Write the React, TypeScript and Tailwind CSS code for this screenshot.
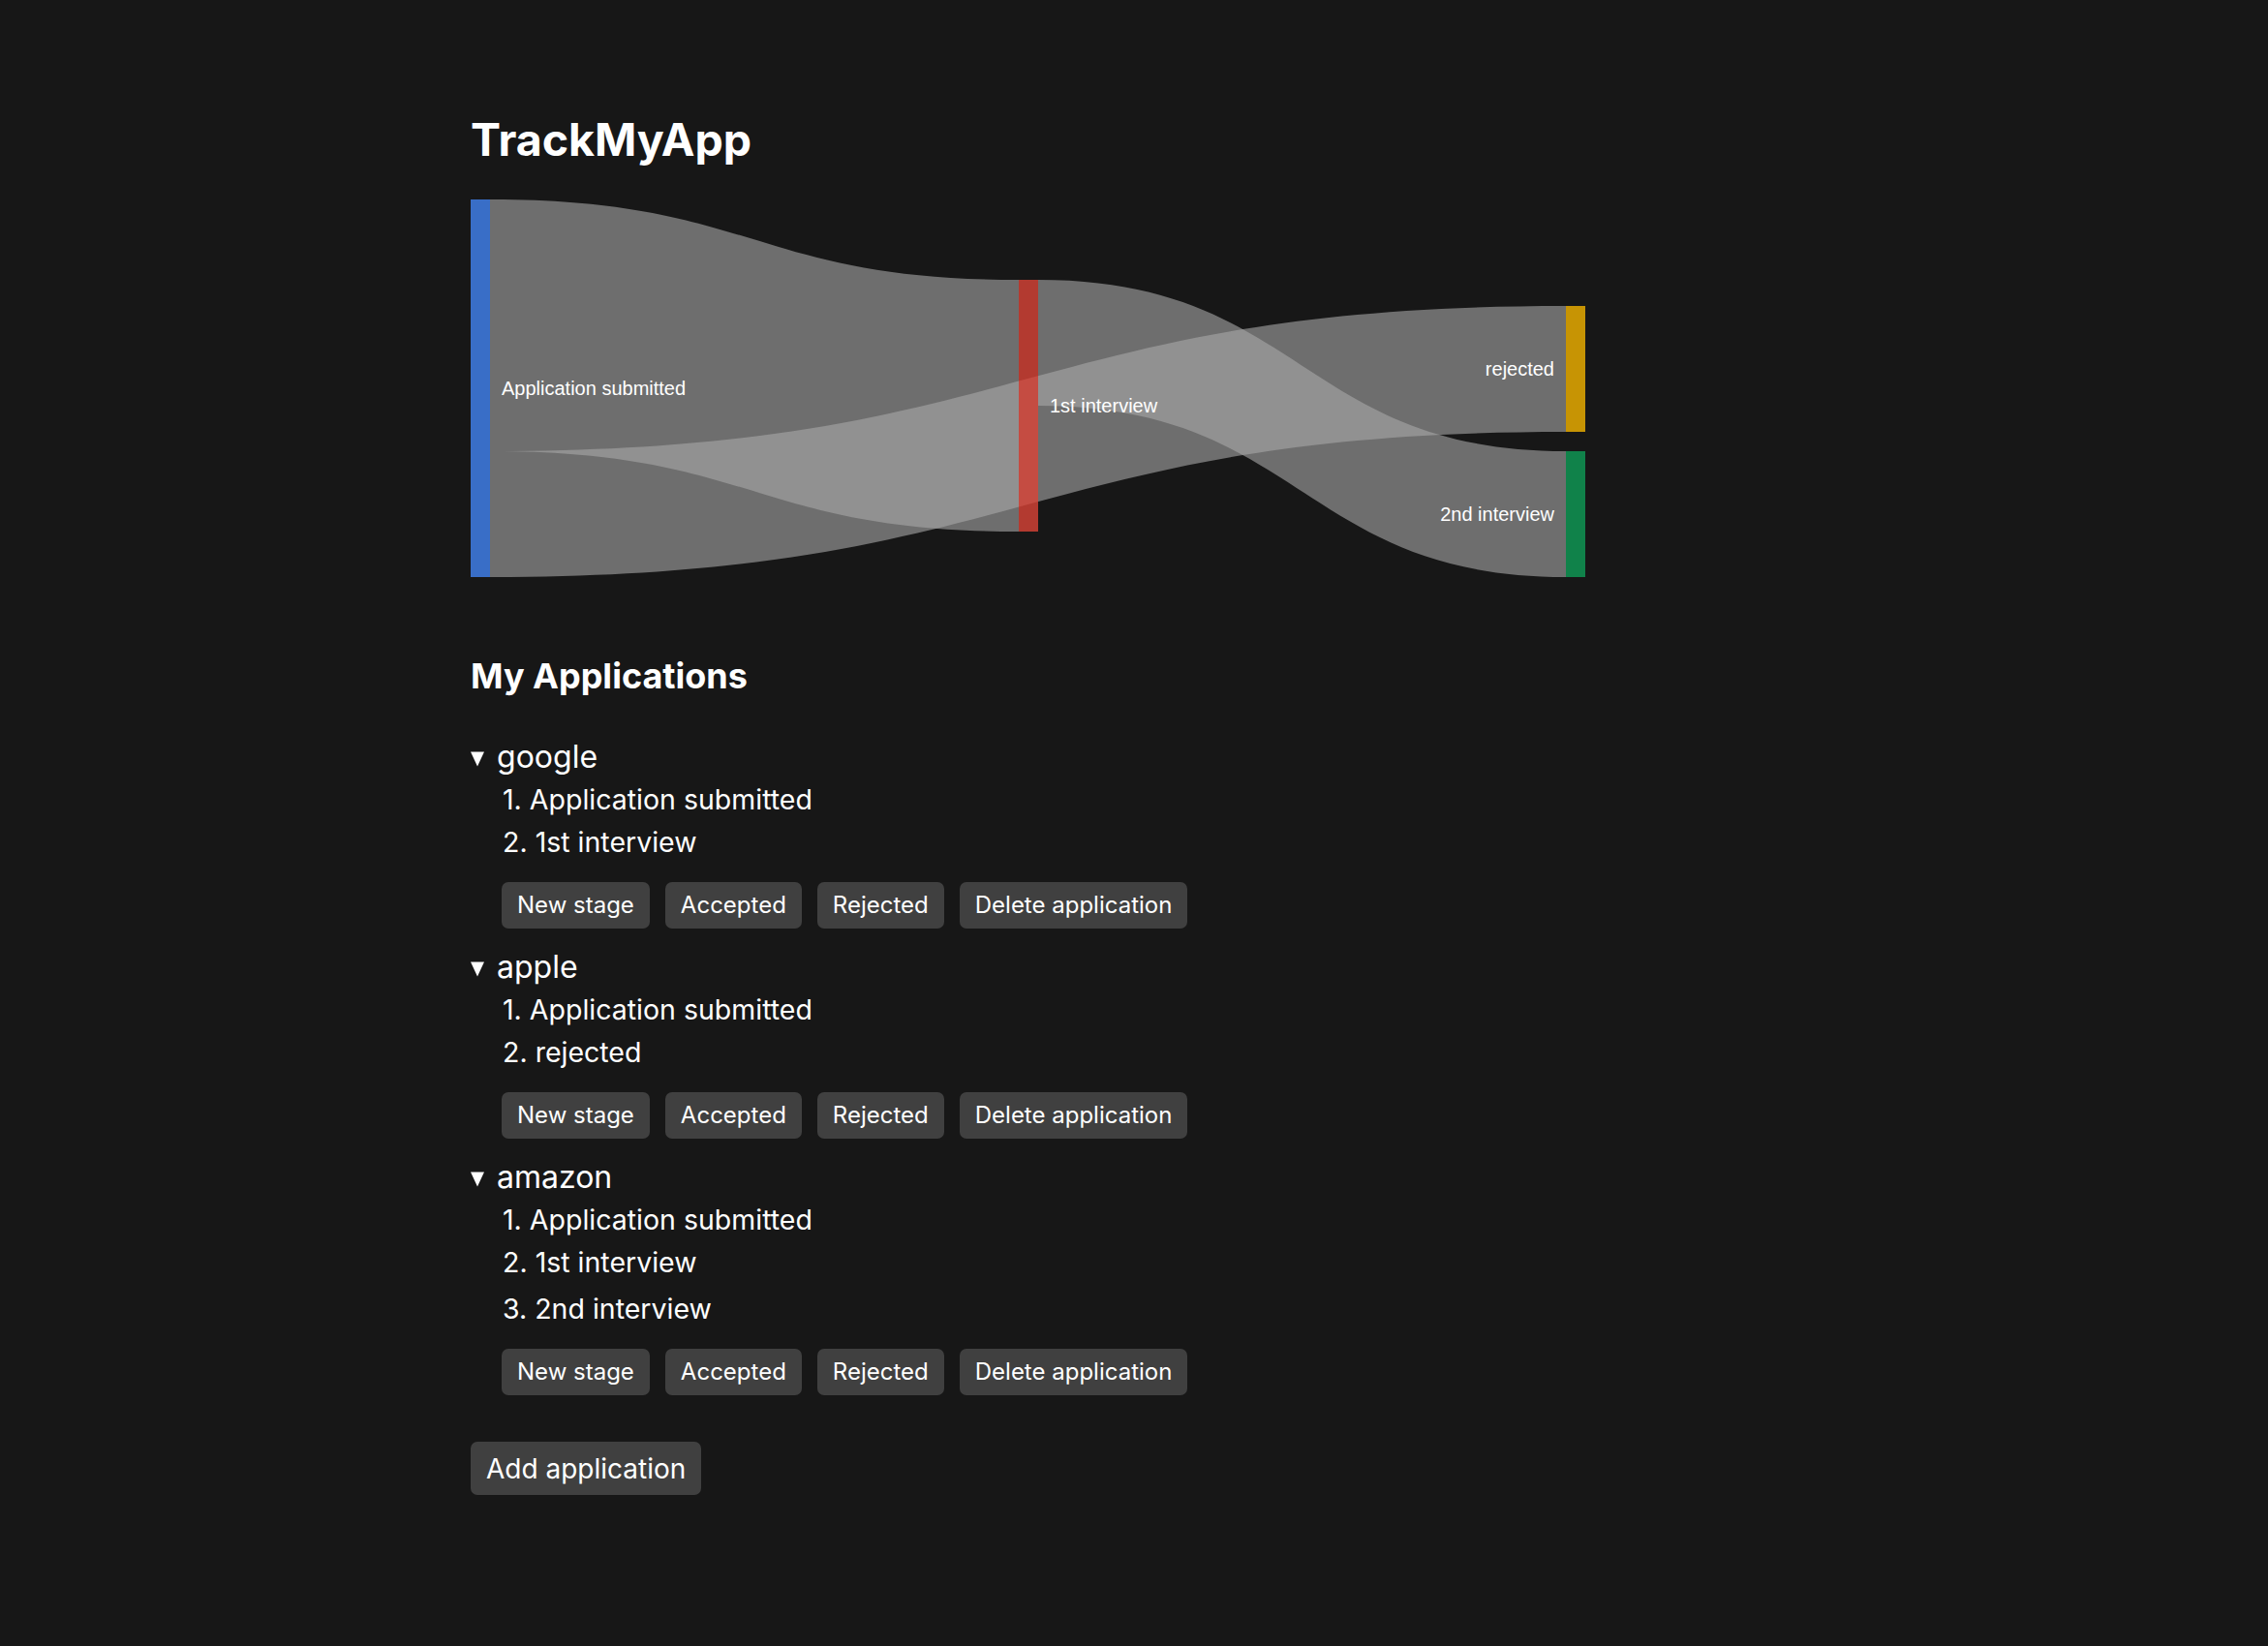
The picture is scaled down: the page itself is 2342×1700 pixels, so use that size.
type Application = { company: string; stages: string[] };

const applications: Application[] = [
  { company: 'google', stages: ['Application submitted', '1st interview'] },
  { company: 'apple', stages: ['Application submitted', 'rejected'] },
  { company: 'amazon', stages: ['Application submitted', '1st interview', '2nd interview'] },
];

// Flow chart: links first, semi-transparent nodes on top
function Sankey() {
  return (
    <svg width={1152} height={390} className="mt-[34px] block">
      <g fill="#a9a9a9" fillOpacity={0.6}>
        <path d="M20,0 C293,0 293,83 566,83 L566,343 C293,343 293,260 20,260 Z" />
        <path d="M20,260 C575.5,260 575.5,110 1131,110 L1131,240 C575.5,240 575.5,390 20,390 Z" />
        <path d="M586,83 C858.5,83 858.5,260 1131,260 L1131,390 C858.5,390 858.5,213 586,213 Z" />
      </g>
      <g fillOpacity={0.8}>
        <rect x={0} y={0} width={20} height={390} fill="#4285f4" />
        <rect x={566} y={83} width={20} height={260} fill="#db4437" />
        <rect x={1131} y={110} width={20} height={130} fill="#f4b400" />
        <rect x={1131} y={260} width={20} height={130} fill="#0f9d58" />
      </g>
      <g fill="#ffffff" fontSize={20} fontFamily="'Liberation Sans', Arial, sans-serif">
        <text x={32} y={202}>Application submitted</text>
        <text x={598} y={220}>1st interview</text>
        <text x={1119} y={182} textAnchor="end">
          rejected
        </text>
        <text x={1119} y={332} textAnchor="end">
          2nd interview
        </text>
      </g>
    </svg>
  );
}

function Btn({ children }: { children: string }) {
  return (
    <button className="h-[48px] rounded-[7px] bg-neutral-700 px-[16px] text-[24px] leading-[30px] text-white">
      {children}
    </button>
  );
}

function ApplicationItem({ app }: { app: Application }) {
  return (
    <details open className="mb-[20px]">
      <summary className="flex cursor-pointer list-none items-start gap-[13px] text-[32px] leading-[40px] [&::-webkit-details-marker]:hidden">
        <svg width={14} height={16} viewBox="0 0 14 16" className="mt-[14px] shrink-0">
          <polygon points="0,0.5 14,0.5 7,15.5" fill="#ffffff" />
        </svg>
        <span>{app.company}</span>
      </summary>
      <ol className="mt-[2px] pl-[33px] text-[28.5px] leading-[44px]">
        {app.stages.map((stage, i) => (
          <li key={stage} className={i === 2 ? 'mt-[4px]' : ''}>
            {i + 1}. {stage}
          </li>
        ))}
      </ol>
      <div className="mt-[19px] flex gap-[16px] pl-[32px]">
        <Btn>New stage</Btn>
        <Btn>Accepted</Btn>
        <Btn>Rejected</Btn>
        <Btn>Delete application</Btn>
      </div>
    </details>
  );
}

export default function App() {
  return (
    <div className="min-h-screen bg-neutral-900 font-['Inter',sans-serif] text-white">
      <div className="mx-auto w-[1370px] pt-[116px] pb-[100px]">
        <h1 className="text-[46.5px] leading-[56px] font-bold">TrackMyApp</h1>
        <Sankey />
        <h2 className="mt-[80px] text-[36px] leading-[44px] font-bold">My Applications</h2>
        <div className="mt-[42px]">
          {applications.map((app) => (
            <ApplicationItem key={app.company} app={app} />
          ))}
        </div>
        <button className="mt-[28px] h-[55px] rounded-[7px] bg-neutral-700 px-[16px] text-[28px] leading-[34px] text-white">
          Add application
        </button>
      </div>
    </div>
  );
}
